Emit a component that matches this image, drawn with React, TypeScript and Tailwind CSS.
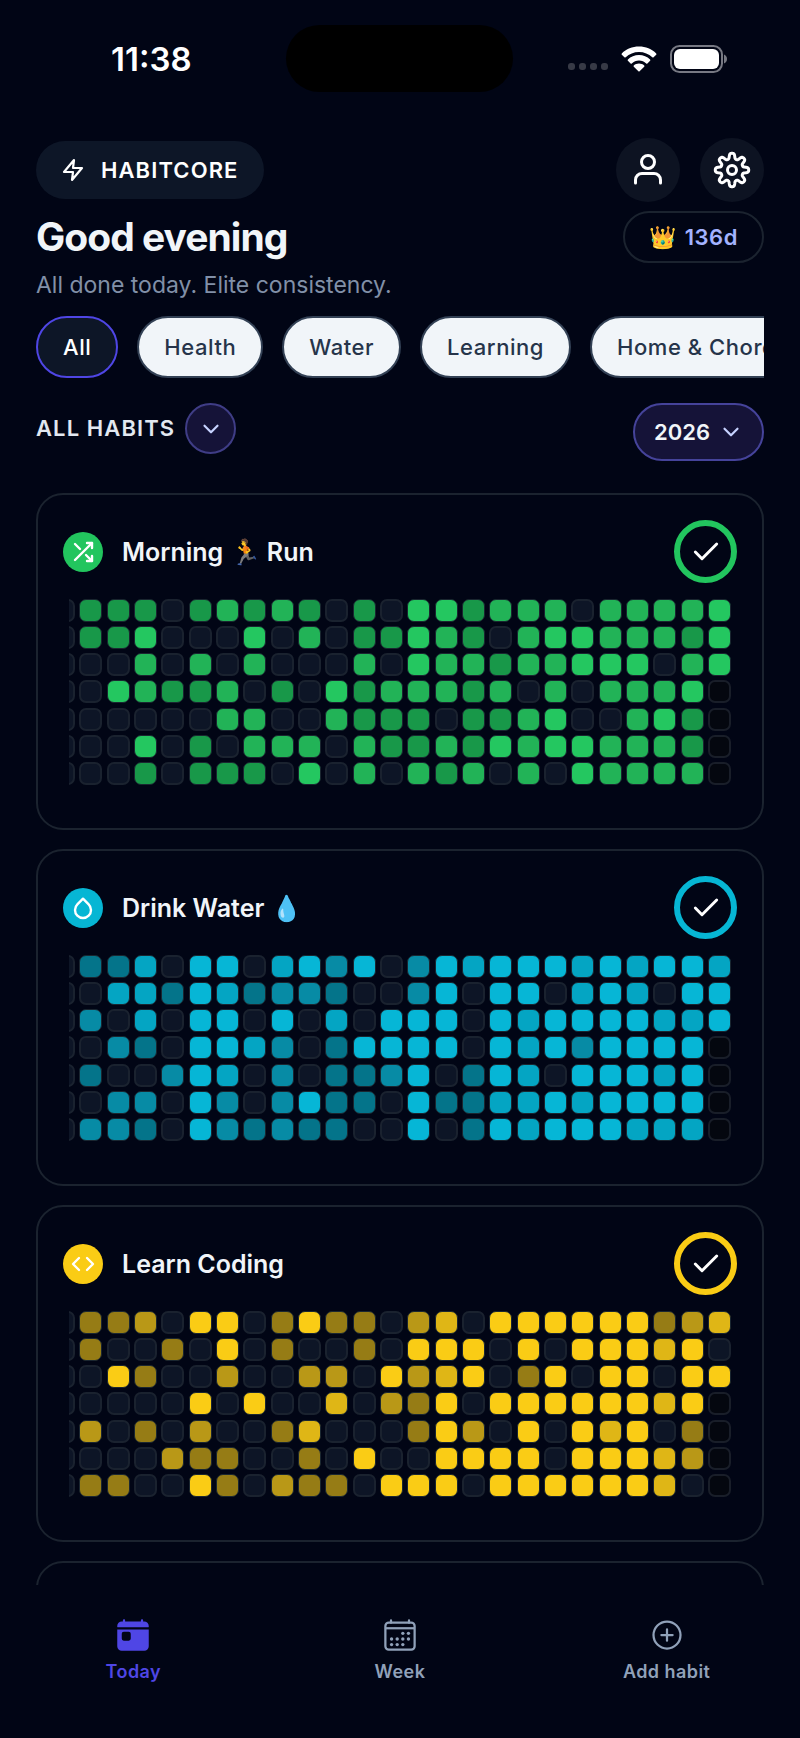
import React, { useState } from 'react';
import { IoAddCircleOutline, IoCalendarOutline, IoToday } from 'react-icons/io5';
import { FiCheck, FiChevronDown, FiCode, FiDroplet, FiShuffle, FiZap } from 'react-icons/fi';

type Tone = 'green' | 'cyan' | 'yellow';

interface Habit {
  id: string;
  name: string;
  tone: Tone;
  icon: React.ReactNode;
  // one string per weekday, one character per week: 0 = missed, 1-4 = intensity, x = future
  days: string[];
}

const fills: Record<Tone, Record<string, string>> = {
  green: { '2': 'bg-[#189849]', '3': 'bg-[#22b357]', '4': 'bg-[#24c760]' },
  cyan: { '1': 'bg-[#04748a]', '2': 'bg-[#078ba5]', '3': 'bg-[#04a5c3]', '4': 'bg-[#06b6d6]' },
  yellow: { '1': 'bg-[#967c15]', '2': 'bg-[#b99817]', '3': 'bg-[#dfb616]', '4': 'bg-[#facc15]' },
};

const badges: Record<Tone, string> = {
  green: 'bg-[#22c55e]',
  cyan: 'bg-[#06b6d4]',
  yellow: 'bg-[#facc15]',
};

const rings: Record<Tone, string> = {
  green: 'border-[#22c55e]',
  cyan: 'border-[#06b6d4]',
  yellow: 'border-[#facc15]',
};

const habits: Habit[] = [
  {
    id: 'run',
    name: 'Morning 🏃 Run',
    tone: 'green',
    icon: <FiShuffle className="h-6 w-6" strokeWidth={2.4} />,
    days: [
      '0222023232020442333033334',
      '0224000403022432034433324',
      '0003030300030433233444034',
      '004322302042333230303334x',
      '000000330032220223400342x',
      '000402033303223243443332x',
      '000202220403032303043333x',
    ],
  },
  {
    id: 'water',
    name: 'Drink Water 💧',
    tone: 'cyan',
    icon: <FiDroplet className="h-6 w-6" strokeWidth={2.4} />,
    days: [
      '0113044034240243444343443',
      '0033143122100240440343044',
      '0203044040304440434444334',
      '002104432014444043424444x',
      '010024302011240143044434x',
      '002204202411041133434444x',
      '022104212110040143444333x',
    ],
  },
  {
    id: 'coding',
    name: 'Learn Coding',
    tone: 'yellow',
    icon: <FiCode className="h-6 w-6" strokeWidth={2.4} />,
    days: [
      '0112044014110230444444123',
      '0100104010010444040444340',
      '0041002002204234014044044',
      '000004040030214044444434x',
      '020102001300014204043401x',
      '000021100104004444044432x',
      '011004102110444044444430x',
    ],
  },
];

const categories = ['All', 'Health', 'Water', 'Learning', 'Home & Chores'];

// outline of an eight-lobed cog centred in a 40x40 box
const cogPath = (() => {
  const steps = 160;
  const pts: string[] = [];
  for (let i = 0; i < steps; i++) {
    const a = (i / steps) * Math.PI * 2;
    const wave = Math.tanh(1.8 * Math.cos(8 * a)) / Math.tanh(1.8);
    const r = 14 + 2.7 * wave;
    pts.push(`${(20 + r * Math.cos(a)).toFixed(2)} ${(20 + r * Math.sin(a)).toFixed(2)}`);
  }
  return `M${pts.join('L')}Z`;
})();

function StatusBar() {
  return (
    <div className="grid grid-cols-3 items-center pt-[25px] pb-[46px]">
      <p className="pl-[75px] text-[33px] leading-8 font-semibold">11:38</p>
      <div className="mx-auto h-[67px] w-[227px] rounded-[34px] bg-black" />
      <div className="flex items-center justify-end gap-[13px] pr-[37px]">
        <div className="flex gap-1 pt-4">
          {[0, 1, 2, 3].map(i => (
            <span key={i} className="h-[7px] w-[7px] rounded-[3px] bg-[#373a46]" />
          ))}
        </div>
        <svg viewBox="0 0 36 26" className="h-[26px] w-9" fill="#fff">
          <path d="M18 .5C24.700.5 30.800 3.100 35.200 7.400c.4.4.4.9 0 1.300l-2.600 2.600c-.4.4-.9.4-1.300 0C27.800 8 23.100 6 18 6S8.200 8 4.700 11.300c-.4.4-.9.4-1.300 0L.8 8.700c-.4-.4-.4-.9 0-1.300C5.200 3.100 11.300.5 18 .5z" />
          <path d="M18 9c4.300 0 8.200 1.700 11.100 4.400.4.4.4.9 0 1.300l-2.700 2.700c-.4.3-.8.3-1.200 0-1.900-1.800-4.400-2.900-7.200-2.900s-5.300 1.100-7.200 2.900c-.4.3-.8.3-1.200 0l-2.700-2.700c-.4-.4-.4-.9 0-1.300C9.800 10.700 13.700 9 18 9z" />
          <path d="M18 17.500c2 0 3.800.7 5.200 1.900.4.3.4.9 0 1.300l-4.600 4.600c-.3.3-.9.3-1.200 0l-4.600-4.600c-.4-.4-.4-1 0-1.300 1.400-1.200 3.200-1.900 5.200-1.900z" />
        </svg>
        <svg viewBox="0 0 57 28" className="h-7 w-[57px]">
          <rect x="1" y="1" width="51" height="26" rx="8.500" fill="none" stroke="#777983" strokeWidth="2" />
          <rect x="4" y="4" width="45" height="20" rx="6" fill="#fff" />
          <path d="M54 9.500c1.900.7 3 2.400 3 4.500s-1.100 3.800-3 4.500z" fill="#777983" />
        </svg>
      </div>
    </div>
  );
}

function Cell({ level, tone }: { level: string; tone: Tone }) {
  if (level === 'x') return <span className="h-[23px] w-[23px] rounded-[7px] border-2 border-[#191e29] bg-[#04070f]" />;
  if (level === '0') return <span className="h-[23px] w-[23px] rounded-[7px] border-2 border-[#1a222f] bg-[#0d1526]" />;
  return <span className={`h-[23px] w-[23px] rounded-[7px] border border-[#1a2630] ${fills[tone][level]}`} />;
}

function HabitCard({ habit }: { habit: Habit }) {
  const [done, setDone] = useState(true);

  return (
    <article className="rounded-[27px] border-2 border-[#1b232f] px-[25px] pt-[25px] pb-[43px]">
      <div className="flex items-center">
        <span className={`flex h-10 w-10 items-center justify-center rounded-full text-white ${badges[habit.tone]}`}>
          {habit.icon}
        </span>
        <h2 className="ml-[19px] flex-1 text-[25px] leading-8 font-semibold text-slate-100">{habit.name}</h2>
        <label className="relative flex">
          <input
            type="checkbox"
            aria-label={`${habit.name} done`}
            checked={done}
            onChange={() => setDone(!done)}
            className={`peer h-[63px] w-[63px] appearance-none rounded-full border-[6px] ${rings[habit.tone]}`}
          />
          <FiCheck className="pointer-events-none absolute inset-0 m-auto hidden h-8 w-8 text-white peer-checked:block" strokeWidth={2.2} />
        </label>
      </div>
      <div className="mx-[6px] mt-4 overflow-hidden">
        <div className="-ml-[17px] flex h-[186px] flex-col justify-between">
          {habit.days.map((row, i) => (
            <div key={i} className="flex justify-between">
              {row.split('').map((level, j) => (
                <Cell key={j} level={level} tone={habit.tone} />
              ))}
            </div>
          ))}
        </div>
      </div>
    </article>
  );
}

export default function App() {
  const [category, setCategory] = useState('All');
  const [year, setYear] = useState('2026');

  return (
    <div className="flex h-screen flex-col overflow-hidden bg-[#010515] font-['Inter',sans-serif] text-white">
      <main className="min-h-0 flex-1 overflow-hidden px-9">
        <StatusBar />

        <header>
          <div className="flex items-center justify-between">
            <div className="flex h-[58px] items-center gap-4 rounded-full bg-[#0d1627] px-[25px] text-[22px] font-semibold tracking-wider">
              <FiZap className="h-6 w-6" strokeWidth={2.2} />
              HABITCORE
            </div>
            <div className="flex gap-5">
              <button aria-label="Profile" className="flex h-16 w-16 items-center justify-center rounded-full bg-[#0d1322]">
                <svg viewBox="0 0 36 36" className="h-9 w-9" fill="none" stroke="currentColor" strokeWidth="3" strokeLinecap="round">
                  <circle cx="18" cy="10" r="6.500" />
                  <path d="M5.500 31v-3a6.500 6.500 0 0 1 6.500-6.500h12a6.500 6.500 0 0 1 6.500 6.500v3" />
                </svg>
              </button>
              <button aria-label="Settings" className="flex h-16 w-16 items-center justify-center rounded-full bg-[#0d1322]">
                <svg viewBox="0 0 40 40" className="h-10 w-10" fill="none" stroke="currentColor" strokeWidth="3" strokeLinejoin="round">
                  <path d={cogPath} />
                  <circle cx="20" cy="20" r="4.500" />
                </svg>
              </button>
            </div>
          </div>

          <div className="mt-[9px] flex items-center justify-between">
            <h1 className="text-[39px] leading-[52px] font-bold tracking-tight text-slate-100">Good evening</h1>
            <div className="flex h-[52px] items-center gap-2 rounded-full border-2 border-[#1b232f] px-6 text-[22px] font-semibold tracking-wide text-indigo-300">
              <span>👑</span>
              <span>136d</span>
            </div>
          </div>
          <p className="mt-[6px] text-[23px] leading-8 text-[#8190a8]">All done today. Elite consistency.</p>
        </header>

        <div className="mt-[15px] flex gap-[19px] overflow-hidden">
          {categories.map(c => (
            <button
              key={c}
              onClick={() => setCategory(c)}
              className={`h-[62px] shrink-0 rounded-full border-2 px-[25px] text-[22px] font-medium tracking-wide ${
                c === category ? 'border-[#4f46e5] bg-[#0d1627] text-white' : 'border-[#334155] bg-slate-100 text-[#26344a]'
              }`}
            >
              {c}
            </button>
          ))}
        </div>

        <div className="mt-[25px] flex items-start justify-between">
          <div className="flex items-center gap-[10px]">
            <h2 className="text-[22px] font-semibold tracking-wider text-slate-200">ALL HABITS</h2>
            <button aria-label="Choose habits" className="flex h-[51px] w-[51px] items-center justify-center rounded-full border-2 border-[#3f3d86] bg-[#151338] text-indigo-200">
              <FiChevronDown className="h-[26px] w-[26px]" />
            </button>
          </div>
          <div className="relative">
            <select
              aria-label="Year"
              value={year}
              onChange={e => setYear(e.target.value)}
              className="h-[58px] w-[131px] appearance-none rounded-full border-2 border-[#45439a] bg-[#151338] pl-[19px] text-[22px] font-semibold text-slate-100"
            >
              <option>2026</option>
              <option>2025</option>
            </select>
            <FiChevronDown className="pointer-events-none absolute inset-y-0 right-5 my-auto h-[26px] w-[26px] text-indigo-200" />
          </div>
        </div>

        <section className="mt-8 flex flex-col gap-[19px]">
          {habits.map(h => (
            <HabitCard key={h.id} habit={h} />
          ))}
          <article className="h-[337px] rounded-[27px] border-2 border-[#1b232f]" />
        </section>
      </main>

      <nav className="grid h-[153px] shrink-0 grid-cols-3 items-start pt-8 text-[18px] leading-6 font-semibold tracking-wide text-slate-400">
        <a href="#today" className="flex flex-col items-center gap-[7px] text-[#4f46e5]">
          <IoToday className="h-9 w-9" />
          Today
        </a>
        <a href="#week" className="flex flex-col items-center gap-[7px]">
          <IoCalendarOutline className="h-9 w-9" />
          Week
        </a>
        <a href="#add" className="flex flex-col items-center gap-[7px]">
          <IoAddCircleOutline className="h-9 w-9" />
          Add habit
        </a>
      </nav>
    </div>
  );
}
